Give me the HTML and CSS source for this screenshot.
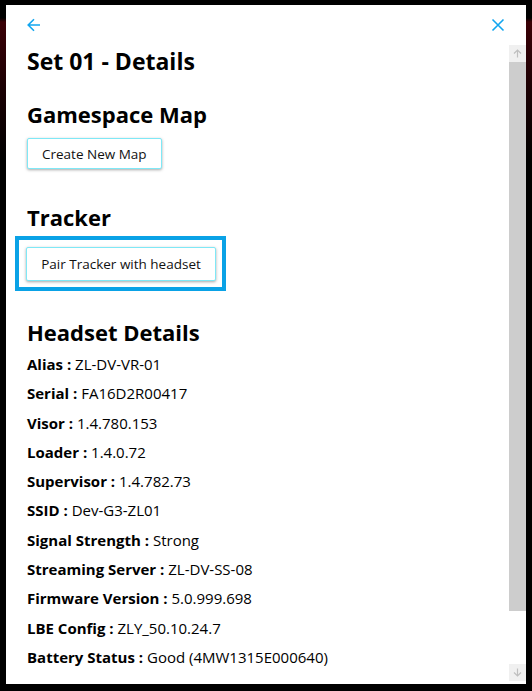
FILE: index.html
```html
<!DOCTYPE html>
<html>
<head>
<meta charset="utf-8">
<link rel="stylesheet" href="styles.css">
</head>
<body>
<div class="panel">
  <div class="header">
    <svg class="icon" width="14" height="14" viewBox="0 0 14 14"><path d="M13 7H1.5M7 1.2L1.2 7L7 12.8" fill="none" stroke="#12a6ef" stroke-width="1.6"/></svg>
    <svg class="icon" width="14" height="14" viewBox="0 0 14 14"><path d="M1.5 1.5L12.5 12.5M12.5 1.5L1.5 12.5" fill="none" stroke="#12a6ef" stroke-width="1.6"/></svg>
  </div>
  <div class="body">
    <div class="content">
      <h1 class="title">Set 01 - Details</h1>
      <h2 class="section">Gamespace Map</h2>
      <div class="btn-wrap"><button class="btn">Create New Map</button></div>
      <h2 class="section tracker">Tracker</h2>
      <div class="highlight"><button class="btn">Pair Tracker with headset</button></div>
      <h2 class="section headset">Headset Details</h2>
      <ul class="details">
        <li><b>Alias :</b> ZL-DV-VR-01</li>
        <li><b>Serial :</b> FA16D2R00417</li>
        <li><b>Visor :</b> 1.4.780.153</li>
        <li><b>Loader :</b> 1.4.0.72</li>
        <li><b>Supervisor :</b> 1.4.782.73</li>
        <li><b>SSID :</b> Dev-G3-ZL01</li>
        <li><b>Signal Strength :</b> Strong</li>
        <li><b>Streaming Server :</b> ZL-DV-SS-08</li>
        <li><b>Firmware Version :</b> 5.0.999.698</li>
        <li><b>LBE Config :</b> ZLY_50.10.24.7</li>
        <li><b>Battery Status :</b> Good (4MW1315E000640)</li>
      </ul>
    </div>
    <div class="scrollbar">
      <div class="sb-btn"><svg width="9" height="9" viewBox="0 0 9 9"><path d="M4.5 8.5V1M1 4.5L4.5 1L8 4.5" fill="none" stroke="#bfbfbf" stroke-width="1.2"/></svg></div>
      <div class="sb-track"><div class="sb-thumb"></div></div>
      <div class="sb-btn"><svg width="9" height="9" viewBox="0 0 9 9"><path d="M4.5 0.5V8M1 4.5L4.5 8L8 4.5" fill="none" stroke="#bfbfbf" stroke-width="1.2"/></svg></div>
    </div>
  </div>
</div>
</body>
</html>
```
FILE: styles.css
```css
* { box-sizing: border-box; }
html, body { margin: 0; height: 100%; }
body {
  background: linear-gradient(to bottom, #000 0, #000 18px, #3a0006 22px, #1a0003 90px, #000 160px);
  padding: 5px 6px 7px 6px;
  font-family: "Open Sans", "Noto Sans", sans-serif;
  color: #000;
}
.panel {
  background: #fff;
  width: 520px;
  height: 679px;
  display: flex;
  flex-direction: column;
  padding-bottom: 3px;
}
.header {
  height: 40px;
  display: flex;
  justify-content: space-between;
  align-items: flex-start;
  padding: 13px 21px 0 21px;
}
.icon { display: block; }
.body {
  flex: 1;
  display: flex;
  min-height: 0;
}
.content {
  flex: 1;
  overflow: hidden;
  padding: 0 0 0 21px;
}
.title, .section {
  font-size: 22px;
  font-weight: 700;
  margin: 0;
  line-height: 30px;
}
.title { margin-top: 1px; font-size: 23px; }
.section { margin-top: 23px; }
.btn-wrap { margin-top: 9px; }
.btn {
  font-family: inherit;
  font-size: 13.5px;
  color: #111;
  background: #fff;
  border: 1px solid #7fe8f6;
  border-radius: 2px;
  box-shadow: 0 1px 3px rgba(0,0,0,0.35);
  height: 31px;
  padding: 0 14px;
  margin: 0;
}
.section.tracker { margin-top: 33px; }
.highlight {
  margin: 4px 0 0 -12px;
  width: 211px;
  height: 55px;
  border: 4px solid #0aa2e6;
  padding: 7px 0 0 7px;
}
.highlight .btn { height: 34px; width: 190px; padding: 0; }
.section.headset { margin-top: 26px; }
.details {
  list-style: none;
  margin: 3px 0 0 0;
  padding: 0;
  font-size: 15px;
}
.details li { line-height: 29.3px; white-space: nowrap; }
.details b { font-weight: 700; }
.scrollbar {
  width: 17px;
  display: flex;
  flex-direction: column;
}
.sb-btn {
  height: 17px;
  background: #f0f0f0;
  display: flex;
  align-items: center;
  justify-content: center;
}
.sb-track {
  flex: 1;
  background: #fff;
}
.sb-thumb {
  height: 549px;
  background: #cdcdcd;
}
```
